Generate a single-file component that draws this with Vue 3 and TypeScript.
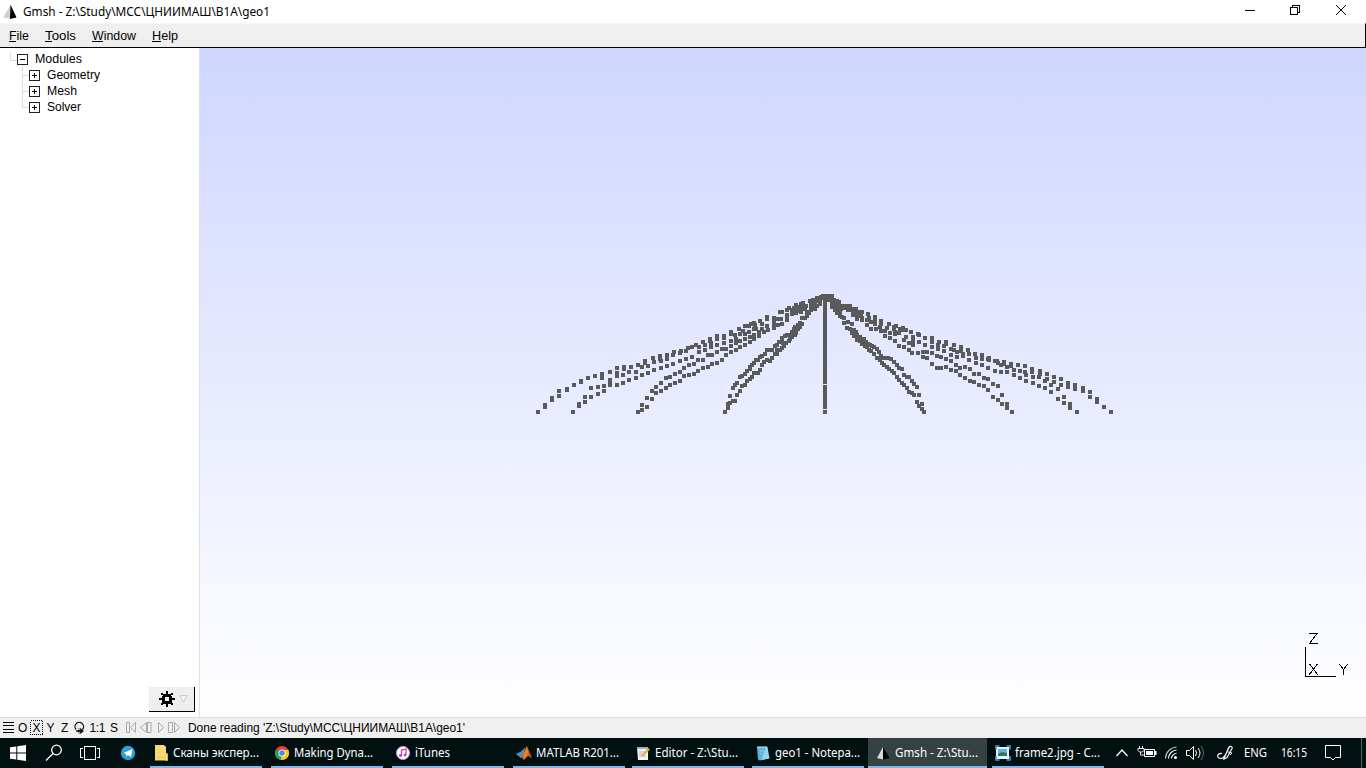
<script setup lang="ts">
import { h } from 'vue'

interface LabelProps { t: string; w: number; base?: number; ui?: boolean; size?: number; fill?: string; under?: number }

// Single-line caption fitted to an exact width
const Label = (p: LabelProps) =>
  h('svg', { width: p.w, height: 16, style: 'display:block;overflow:visible;flex:none' }, [
    h('text', {
      x: 0, y: p.base ?? 12, textLength: p.w, lengthAdjust: 'spacingAndGlyphs', fill: p.fill ?? '#000',
      'font-family': p.ui ? '"Noto Sans","Open Sans",sans-serif' : '"Liberation Sans",Arial,sans-serif',
      'font-size': p.size ?? 12,
    }, p.t),
    p.under ? h('rect', { x: 0, y: (p.base ?? 12) + 1, width: p.under, height: 1, fill: '#000' }) : null,
  ])
Label.props = ['t', 'w', 'base', 'ui', 'size', 'fill', 'under']

const menus = [
  { t: 'File', w: 20, u: 7 }, { t: 'Tools', w: 31, u: 7 },
  { t: 'Window', w: 44, u: 11 }, { t: 'Help', w: 26, u: 9 },
]
const modules = [{ t: 'Geometry', w: 53 }, { t: 'Mesh', w: 30 }, { t: 'Solver', w: 34 }]
const tasks = [
  { t: 'Сканы экспер...', w: 86, icon: 'folder' },
  { t: 'Making Dyna...', w: 79, icon: 'chrome' },
  { t: 'iTunes', w: 35, icon: 'itunes' },
  { t: 'MATLAB R201...', w: 83, icon: 'matlab' },
  { t: 'Editor - Z:\\Stu...', w: 83, icon: 'editor' },
  { t: 'geo1 - Notepa...', w: 85, icon: 'notepad' },
  { t: 'Gmsh - Z:\\Stu...', w: 83, icon: 'gmsh', active: true },
  { t: 'frame2.jpg - C...', w: 85, icon: 'picture' },
]

// Geometry points in thirds of a pixel, grouped with their own origin
const groups: [number, number, string][] = [
  [530, 330, '24,246 45,231 45,225 66,210 66,204 87,198 87,183 111,180 111,177 132,165 153,155 153,153 174,144 195,138 216,144 216,132 240,126 261,114 282,117 282,111 303,111 324,105 336,111 345,100 345,94 354,108 369,84 372,96 390,78 390,86 393,93 411,75 411,88 429,75 432,67 450,69 453,63 468,63 474,54 486,51 498,45 507,50 519,37 525,45 540,27 540,33 543,40 543,50 561,18 561,26 561,45 582,18 582,24 582,39 129,246 147,228 147,222 165,216 165,201 183,201 204,192 222,183 240,165 261,165 279,159 297,150 318,144 336,135 354,129 372,120 393,114 411,108 429,102 450,93 468,87 486,81 507,66 525,60 183,174 204,171 222,168 240,150 240,158 261,129 261,139 279,135 297,126 318,126 324,246 336,240 336,225 351,231 351,204 366,207 366,183 378,189 378,171 393,183 393,159 408,174 408,144 420,165 420,141 435,159 435,132 450,153 450,126 462,138 462,114 477,135 477,105 492,132 492,102 504,123 504,90 519,114 519,90 534,111 534,75 546,102 546,75 561,99 561,66 576,90 576,57 588,75 588,57'],
  [680, 285, '153,141 153,147 153,169 153,183 153,201 165,150 168,162 168,174 168,195 177,132 180,147 180,168 180,186 189,138 195,124 195,147 195,162 195,180 201,124 207,124 207,142 210,156 210,171 213,117 222,114 225,119 222,133 222,150 222,162 228,132 240,108 237,141 237,153 246,118 246,132 252,142 261,96 261,102 261,124 264,136 282,100 282,106 282,118 282,130 300,82 306,82 294,120 303,102 306,117 294,103 321,76 321,90 321,96 321,104 327,70 336,76 342,70 336,87 348,60 348,75 348,84 351,66 354,78 363,58 363,70 363,82 369,54 369,66 375,72 378,62 381,82 387,84 390,48 393,54 393,66 393,76 399,46 399,60 405,50 402,66 405,72 411,38 411,48 411,62 417,38 420,44 420,57 423,36 429,33 429,40 135,381 144,369 144,357 150,354 159,348 165,348 150,333 171,330 180,318 159,309 165,300 171,294 186,303 195,300 201,288 210,282 180,276 186,274 195,267 201,258 216,276 222,264 234,264 240,255 210,252 210,246 216,240 222,234 228,225 234,225 240,216 246,240 252,231 261,225 270,228 276,219 246,213 255,207 261,195 270,195 276,195 285,183 291,180 297,170 306,165 285,207 291,207 291,196 300,196 306,188 312,183 309,174 306,160 315,154 321,150 327,150 318,173 327,168 330,162 336,150 336,140 342,132 345,126 336,156 345,150 348,144 348,138 354,120 360,114 354,132 360,126 366,117 366,99 375,99 381,94'],
  [815, 285, '30,33 36,33 42,33 51,33 51,39 42,45 51,48 57,45 66,48 72,51 60,54 51,57 54,66 51,66 60,60 66,60 63,66 72,62 72,72 69,78 60,75 66,84 75,84 84,62 93,62 105,62 78,72 81,68 90,70 99,70 99,76 105,74 114,71 123,72 114,80 114,90 123,82 129,82 141,82 126,94 126,102 138,92 141,98 141,106 160,88 162,100 156,120 156,105 168,112 168,132 180,97 180,106 180,118 183,132 199,108 199,118 196,126 199,138 210,153 210,138 221,118 217,130 225,144 225,159 237,126 243,122 240,147 240,141 237,133 240,168 255,132 264,129 264,134 252,145 252,183 267,165 273,135 273,156 267,186 288,141 291,174 282,174 294,168 294,180 282,195 291,204 294,156 309,147 312,149 312,171 309,204 330,160 330,180 324,201 324,216 336,201 336,219 87,114 99,111 111,117 87,99 81,95 75,93 96,129 105,132 117,135 111,144 123,141 117,153 126,150 135,156 126,159 126,165 141,162 147,162 135,168 141,177 150,184 147,174 153,171 159,177 165,180 171,183 156,186 162,195 168,198 177,186 186,192 192,201 177,207 186,219 195,225 198,213 204,219 213,219 201,234 207,240 219,219 228,222 237,231 216,246 222,252 231,258 237,264 246,240 252,249 261,252 246,276 252,285 261,294 267,270 276,276 282,276 291,288 297,297 306,306 267,300 276,309 282,321 291,324 297,330 312,330 306,351 312,363 321,357 321,372 327,381 30,381'],
  [930, 330, '6,25 6,35 6,51 6,69 6,102 27,36 24,46 24,56 21,78 21,114 33,81 33,114 42,48 42,63 48,37 48,43 48,87 48,111 63,57 63,75 63,93 63,120 72,45 72,60 78,105 78,123 81,67 81,81 93,51 93,62 90,114 90,135 99,71 99,78 105,111 105,144 114,60 117,72 117,90 120,117 120,153 135,73 138,84 138,99 132,132 132,156 156,76 156,86 156,105 147,132 147,165 162,144 162,168 174,87 177,84 177,90 174,114 174,147 174,180 195,93 201,93 195,123 189,162 189,201 204,168 204,210 204,99 213,105 213,126 222,96 222,102 216,195 216,222 231,111 231,126 231,222 231,234 246,246 243,102 243,109 252,120 252,135 264,106 270,123 270,144 285,108 285,126 288,135 288,153 306,118 306,127 309,141 309,159 330,123 330,132 327,141 327,168 351,132 351,147 345,153 345,174 372,141 372,156 363,165 363,186 393,147 393,165 384,177 384,207 402,201 402,219 420,222 420,234 441,246 414,159 414,171 435,165 435,177 459,174 459,183 480,186 480,201 501,207 501,216 522,230 543,246'],
]
// Each point is a 4×4 square; the plot area begins at (200, 48)
const pointPath = groups.map(([ox, oy, s]) => s.split(' ').map((p) => {
  const [x, y] = p.split(',').map(Number)
  return `M${Math.round(ox + x / 3 - 2) - 200} ${Math.round(oy + y / 3 - 2) - 48}h4v4h-4z`
}).join('')).join('')
</script>

<template>
  <div class="window">
    <header class="titlebar">
      <svg class="app-icon" width="16" height="16" viewBox="0 0 16 16">
        <path d="M8.500 1L1 13.500l8 1z" fill="#d0d0d0" /><path d="M8.500 0.500l6 13-6.500 1.500z" fill="#000" />
      </svg>
      <Label t="Gmsh - Z:\Study\МСС\ЦНИИМАШ\B1A\geo1" :w="247" :ui="true" />
      <svg class="controls" width="110" height="16" fill="none" stroke="#000" shape-rendering="crispEdges">
        <path d="M4 6.500h10M49.500 3.500h7v7h-7zM51.500 3.500v-2h7v7h-2" />
        <path d="M95 1l10 10M105 1l-10 10" shape-rendering="auto" />
      </svg>
    </header>
    <nav class="menubar">
      <Label v-for="m in menus" :key="m.t" :t="m.t" :w="m.w" :under="m.u" />
    </nav>
    <main class="body">
      <aside class="sidebar">
        <div class="tree">
          <div class="row">
            <svg width="35" height="16" fill="none" shape-rendering="crispEdges">
              <path d="M10.500 1v8.500h6M22.500 14v2" stroke="#ddd" />
              <path d="M17.500 3.500h10v10h-10z" stroke="#222" /><path d="M20 8.500h5" stroke="#000" />
            </svg>
            <Label t="Modules" :w="47" />
          </div>
          <div v-for="(m, i) in modules" :key="m.t" class="row">
            <svg width="47" height="16" fill="none" shape-rendering="crispEdges">
              <path :d="`M22.500 0v${i === 2 ? 8.5 : 16}M22 8.500h7`" stroke="#ddd" />
              <path d="M29.500 3.500h10v10h-10z" stroke="#222" /><path d="M32 8.500h5M34.500 6v5" stroke="#000" />
            </svg>
            <Label :t="m.t" :w="m.w" />
          </div>
        </div>
        <div class="gear">
          <svg width="46" height="25" shape-rendering="crispEdges">
            <g fill="#000">
              <path fill-rule="evenodd" d="M14 7h8v2h1v7h-1v1h-8v-1h-1V9h1zM16 10v4h4v-4z" />
              <path d="M17 4h2v3h-2zM17 17h2v3h-2zM10 11h3v2h-3zM23 11h3v2h-3zM12 6h2v2h-2zM22 6h2v2h-2zM12 16h2v2h-2zM22 16h2v2h-2z" />
            </g>
            <path d="M31 8.500h7l-3.500 7z" fill="#f4f4f4" stroke="#ccc" shape-rendering="auto" />
          </svg>
        </div>
      </aside>
      <section class="plot">
        <svg width="1166" height="669" shape-rendering="crispEdges">
          <path :d="pointPath" fill="#5a5a5a" />
          <path d="M623 246h4v90h-4zM623 337h4v24h-4z" fill="#5a5a5a" />
          <g fill="none" stroke="#000">
            <path d="M1105.500 599v29.500h30.500" />
            <path d="M1109 585.500h8l-7.500 10h8M1109.500 616l8.500 11M1117.500 616l-8.500 11M1139.500 616l4 5.500v5.500M1147.500 616l-4 5.500" />
          </g>
        </svg>
      </section>
    </main>
    <footer class="status">
      <svg width="188" height="20" font-family="Liberation Sans, Arial, sans-serif" font-size="12">
        <path d="M3 4.500h11M3 7.500h11M3 11.500h11M3 14.500h11" stroke="#000" shape-rendering="crispEdges" />
        <text x="18" y="14">O</text><text x="32.500" y="14">X</text><text x="46.500" y="14">Y</text>
        <text x="61" y="14">Z</text><text x="89.500" y="14" textLength="16">1:1</text><text x="110" y="14">S</text>
        <rect x="30.500" y="2.500" width="12" height="14" fill="none" stroke="#000" stroke-dasharray="1 1" shape-rendering="crispEdges" />
        <path d="M76 11.500a4.300 4.300 0 1 1 6.500 0" fill="none" stroke="#000" stroke-width="1.200" /><path d="M76.500 12.500h4v-2l3 2.500-3 2.500v-2h-4zM79 10v6" fill="#000" stroke="#000" stroke-width=".6" />
        <g fill="none" stroke="#a9a9a9"><path d="M126.500 4.500h3v10h-3zM135.500 4.500v10l-5-5zM147.500 4.500h3.500v10h-3.500zM146.500 4.500v10l-6-5zM158.500 4.500v10l5-5zM168.500 4.500h4v10h-4zM174.500 4.500v10l5-5z" /></g>
      </svg>
      <Label t="Done reading 'Z:\Study\МСС\ЦНИИМАШ\B1A\geo1'" :w="277" :base="13" />
    </footer>
    <div class="taskbar">
      <svg class="launch" width="150" height="30">
        <path d="M10 9.300l6.300-.9v6.100H10zM17.300 8.200L26 7v7.500h-8.700zM10 15.500h6.300v6.100l-6.300-.9zM17.300 15.500H26V23l-8.700-1.200z" fill="#fff" />
        <g fill="none" stroke="#fff" stroke-width="1.300"><circle cx="56.500" cy="12" r="4.800" /><path d="M53 15.500l-7 7" /></g>
        <path d="M84.500 8.500h11v13h-11zM83 10.500h-2.500v9H83M97 10.500h2.500v9H97" fill="none" stroke="#fff" shape-rendering="crispEdges" />
        <circle cx="128" cy="15" r="7.200" fill="#2f9fd8" /><path d="M123.500 15l9-4-1.500 8-3-2-1.500 1.500-.5-2.500z" fill="#fff" />
      </svg>
      <div class="tasks">
        <div v-for="k in tasks" :key="k.t" class="task" :class="{ active: k.active }">
          <svg class="icon" width="20" height="16" viewBox="0 0 20 16">
            <g v-if="k.icon === 'folder'"><path d="M2 0h9l2 2v6h1.500v7.500H2z" fill="#f8d775" /><path d="M4 12.500h8M12.500 9.500h2v6h-2z" stroke="#e5b84c" fill="#ffeaa0" stroke-width=".6" /></g>
            <g v-else-if="k.icon === 'chrome'"><circle cx="8" cy="8" r="7" fill="#e74135" /><path d="M8 8L2 4.500A7 7 0 0 0 7 15z" fill="#22a45d" /><path d="M8 8L7 15A7 7 0 0 0 14.300 5H8z" fill="#fbc913" /><circle cx="8" cy="8" r="3.500" fill="#fff" /><circle cx="8" cy="8" r="2.700" fill="#4787ed" /></g>
            <g v-else-if="k.icon === 'itunes'"><circle cx="8" cy="8" r="6.500" fill="#fff" stroke="#b99bea" /><path d="M6.500 10.500V5l4.500-1v6" stroke="#e93d8c" stroke-width="1.300" fill="none" /><circle cx="5.500" cy="10.500" r="1.500" fill="#a04be0" /><circle cx="10" cy="10" r="1.500" fill="#e93d8c" /></g>
            <g v-else-if="k.icon === 'matlab'"><path d="M0 9l5-2.500L9.500 2 7 12l-2 1z" fill="#4b91c8" /><path d="M5 12l4-6 2-5 5 12-4-2-4 4z" fill="#d9531e" /><path d="M10.500 1l1.500 5-1 5-3 3-1-3z" fill="#f3a331" opacity=".6" /></g>
            <g v-else-if="k.icon === 'editor'"><path d="M2 2h11v13H3z" fill="#f1f3f5" /><path d="M2 2h11v2H2z" fill="#9db4c8" /><path d="M4 7h7M4 9h5M4 11h7" stroke="#a9bccd" /><path d="M6 11l7-8 2 1.500-7 7z" fill="#f4a62b" /></g>
            <g v-else-if="k.icon === 'notepad'"><path d="M2 2h9l3 11-9 2.500-2-1z" fill="#58b6e3" /><path d="M11 2l1.500 0 2 11.500-8 1.500" fill="#9ad7ee" /><path d="M3 1v2M5 1v2M7 1v2M9 1v2M11 1v2" stroke="#d9ecf3" /><path d="M5 6h6M5 9h7" stroke="#8acbe9" /></g>
            <g v-else-if="k.icon === 'gmsh'"><path d="M8 2L2 13l6 1.500z" fill="#d9d9d9" /><path d="M8 2l6.500 11L8 14.500z" fill="#000" /></g>
            <g v-else><path d="M1 2h13v12H1z" fill="#e9f4fc" /><path d="M3 4h9v7H3z" fill="#64b4e2" /><path d="M3 9l4-2 5 1v3H3z" fill="#32745f" /><path d="M1 4.500V1h3.500M11.500 1H15v3.500M15 11v4h-3.500M4.500 15H1v-4" fill="none" stroke="#4a98d5" stroke-width="1.600" /></g>
          </svg>
          <Label :t="k.t" :w="k.w" :ui="true" fill="#fff" :base="12" />
        </div>
      </div>
      <svg class="tray" width="263" height="30" fill="none" stroke="#fff" font-family="Noto Sans, Open Sans, sans-serif">
        <path d="M13.500 18l5.500-6 5.500 6" stroke-width="1.300" />
        <path d="M41.500 11.500h10v7h-10z" /><path d="M43 13h7v4h-7zM52 13h1.500v4H52z" fill="#fff" stroke="none" /><path d="M36.500 8v2.500M39.500 8v2.500M35 10.500h6v2l-1.500 1.500h-3l-1.500-1.500zM37.500 14v3h4" stroke-width=".9" />
        <g stroke-width="1.100"><path d="M62.500 20.500c0-6 5-11 11-11.500" opacity=".75" /><path d="M65.500 20.500c0-4.500 3.500-8 8-8.500" /><path d="M68.500 20.500c0-2.500 2-5 5-5" /></g><circle cx="72.500" cy="19.500" r="1.500" fill="#fff" stroke="none" />
        <path d="M83.500 12.500h3l4-4v13l-4-4h-3zM92.500 12q2 3 0 6M95 10q4 5 0 10" /><path d="M98 8q5 7 0 14" opacity=".35" />
        <path d="M119 15.500c-5-1-6 5-1 5 4 0 5-5 8-11 1-2 4-1 3 1l-5 9-3 1.500 1-3 4-9" stroke-width="1.200" /><path d="M125 14l4 1-2 2" />
        <text x="141" y="19" textLength="23" lengthAdjust="spacingAndGlyphs" font-size="12" fill="#fff" stroke="none">ENG</text>
        <text x="178" y="19" textLength="26" lengthAdjust="spacingAndGlyphs" font-size="12" fill="#fff" stroke="none">16:15</text>
        <path d="M222.500 7.500h15v12h-5l-2.500 2.500-2.500-2.500h-5z" /><path d="M258.500 0v30" stroke="#59635f" />
      </svg>
    </div>
  </div>
</template>

<style scoped>
.window { width: 1366px; height: 768px; display: flex; flex-direction: column; background: #fff; overflow: hidden; }
svg { display: block; flex: none; }
.titlebar { height: 23px; display: flex; padding-top: 4px; box-sizing: border-box; flex: none; }
.app-icon { margin: 0 5px 0 2px; }
.controls { margin-left: 971px; }
.menubar { height: 25px; box-sizing: border-box; display: flex; gap: 16px; padding: 4px 0 0 9px; background: #efefef; border-top: 1px solid #f7f7f7; border-bottom: 1px solid #000; border-right: 1px solid #000; flex: none; }
.body { height: 669px; display: flex; flex: none; }
.sidebar { width: 200px; box-sizing: border-box; border-right: 1px solid #e0e0e0; display: flex; flex-direction: column; justify-content: space-between; }
.tree { padding-top: 3px; }
.row { display: flex; height: 16px; }
.gear { width: 46px; height: 25px; box-sizing: border-box; align-self: flex-end; margin: 0 4px 5px 0; background: #efefef; border-right: 1px solid #000; border-bottom: 1px solid #000; }
.plot { width: 1166px; background: linear-gradient(#cfd6ff, #fff); }
.status { height: 21px; box-sizing: border-box; background: #efefef; border-top: 1px solid #ddd; display: flex; padding-top: 1px; flex: none; }
.status > svg:first-child { margin-top: -1px; }
.taskbar { height: 30px; background: #011112; display: flex; flex: none; }
.tasks { display: grid; grid-template-columns: 121px 121px 121px 119px 120px 120px 120px 111px; width: 953px; }
.task { box-sizing: border-box; height: 30px; width: 112px; display: flex; padding: 7px 0 0 3px; border-bottom: 2px solid #76b9ed; }
.active { width: 119px; margin-left: -4px; padding-left: 7px; background: #344342; }
</style>
